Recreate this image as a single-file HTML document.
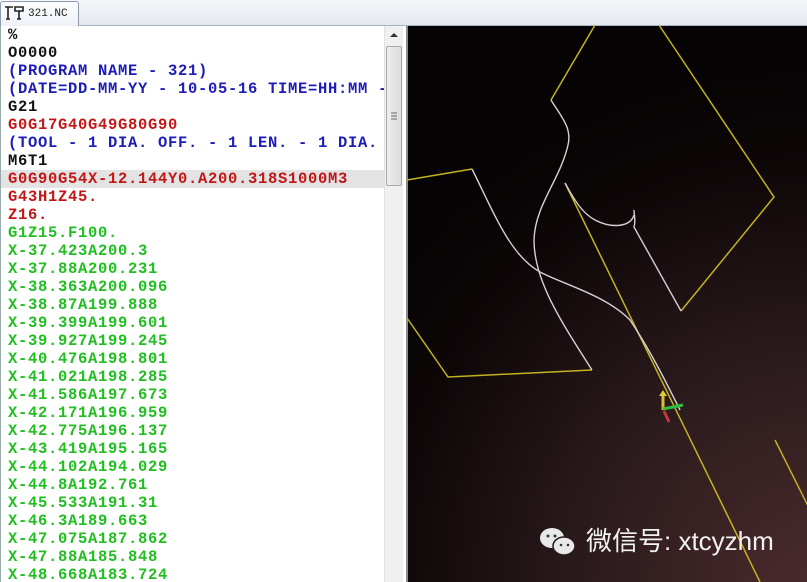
<!DOCTYPE html>
<html><head><meta charset="utf-8"><style>
body{margin:0;width:807px;height:582px;overflow:hidden;background:#fff;position:relative;font-family:"Liberation Sans",sans-serif}
#tabbar{position:absolute;left:0;top:0;width:807px;height:25px;background:linear-gradient(#f4f6f9,#e4e8ee);border-bottom:1px solid #a9b4c2}
#tab{position:absolute;left:0;top:1px;width:77px;height:24px;background:linear-gradient(#fdfdfe,#eef2f7);border:1px solid #8d9bb0;border-bottom:none;border-radius:3px 3px 0 0;font:11px "Liberation Mono",monospace;color:#222}
#tab span{position:absolute;left:27px;top:6px}
#code{position:absolute;left:0;top:26px;width:384px;height:556px;overflow:hidden;background:#fff;border-left:1px solid #9aa}
.l{height:18px;line-height:19px;padding-left:7px;font:bold 15.5px "Liberation Mono",monospace;letter-spacing:0.7px;white-space:nowrap}
.k{color:#111}.b{color:#1c1cb8}.r{color:#c21616}.g{color:#1fbf1f}
.hl{background:#e3e3e3}
#sb{position:absolute;left:384px;top:26px;width:18px;height:556px;background:#f0f0f0;border-left:1px solid #e2e2e2}
#thumb{position:absolute;left:1px;top:20px;width:14px;height:138px;border:1px solid #a8a8a8;border-radius:2px;background:linear-gradient(90deg,#eee,#dcdcdc)}
#view{position:absolute;left:406px;top:26px;width:401px;height:556px;background:radial-gradient(ellipse 520px 520px at 100% 100%,#4a2a2c 0%,#2a1a1c 45%,#0e0708 80%,#050303 100%);border-left:2px solid #8a8e92}
</style></head><body>
<div id="tabbar"><div id="tab"><svg width="22" height="18" style="position:absolute;left:2px;top:2px" viewBox="0 0 22 18"><path d="M2 3h8M5 3v12M3 15h4M12 3h8v4h-8zM16 7v8M14 15h4" stroke="#222" stroke-width="1.6" fill="none"/></svg><span>321.NC</span></div></div>
<div id="code">
<div class="l k">%</div>
<div class="l k">O0000</div>
<div class="l b">(PROGRAM NAME - 321)</div>
<div class="l b">(DATE=DD-MM-YY - 10-05-16 TIME=HH:MM - 1</div>
<div class="l k">G21</div>
<div class="l r">G0G17G40G49G80G90</div>
<div class="l b">(TOOL - 1 DIA. OFF. - 1 LEN. - 1 DIA. M</div>
<div class="l k">M6T1</div>
<div class="l r hl">G0G90G54X-12.144Y0.A200.318S1000M3</div>
<div class="l r">G43H1Z45.</div>
<div class="l r">Z16.</div>
<div class="l g">G1Z15.F100.</div>
<div class="l g">X-37.423A200.3</div>
<div class="l g">X-37.88A200.231</div>
<div class="l g">X-38.363A200.096</div>
<div class="l g">X-38.87A199.888</div>
<div class="l g">X-39.399A199.601</div>
<div class="l g">X-39.927A199.245</div>
<div class="l g">X-40.476A198.801</div>
<div class="l g">X-41.021A198.285</div>
<div class="l g">X-41.586A197.673</div>
<div class="l g">X-42.171A196.959</div>
<div class="l g">X-42.775A196.137</div>
<div class="l g">X-43.419A195.165</div>
<div class="l g">X-44.102A194.029</div>
<div class="l g">X-44.8A192.761</div>
<div class="l g">X-45.533A191.31</div>
<div class="l g">X-46.3A189.663</div>
<div class="l g">X-47.075A187.862</div>
<div class="l g">X-47.88A185.848</div>
<div class="l g">X-48.668A183.724</div>
</div>
<div id="sb"><svg width="16" height="14" style="position:absolute;left:1px;top:2px"><path d="M4 9l4-4 4 4z" fill="#333"/></svg><div id="thumb"><svg width="14" height="10" style="position:absolute;left:0;top:64px"><path d="M4 2h6M4 5h6M4 8h6" stroke="#666"/></svg></div></div>
<div id="view"></div>
<svg width="807" height="582" style="position:absolute;left:0;top:0" viewBox="0 0 807 582">
<g fill="none" stroke="#c4b21e" stroke-width="1.5">
<path d="M595 25L551 100"/>
<path d="M407 180L472 169"/>
<path d="M592 370L448 377L407 318"/>
<path d="M659 25L774 197L681 311"/>
<path d="M565 183L760 582"/>
<path d="M775 440L815 520"/>
</g>
<g fill="none" stroke="#d6d0d4" stroke-width="1.4">
<path d="M551 100C562 118 572 128 568 145C560 180 535 205 534 240C534 280 560 320 592 370"/>
<path d="M472 169C495 215 510 255 540 272C565 285 605 295 630 320C650 350 665 380 680 410"/>
<path d="M681 311L634 227C636 220 634 215 634 210M634 215C630 228 610 228 595 220C580 212 572 195 565 183"/>
</g>
<path d="M663 410V394" stroke="#d8c030" stroke-width="3"/><path d="M659 396l4-6 4 6z" fill="#e0c838"/>
<path d="M663 409L683 405" stroke="#2ec03a" stroke-width="3"/>
<path d="M664 411L669 422" stroke="#c0383c" stroke-width="3"/>
<g transform="translate(540,527)"><ellipse cx="12" cy="11" rx="12" ry="10" fill="#e8e8e8"/><ellipse cx="24" cy="19" rx="11" ry="9" fill="#e8e8e8" stroke="#2a1a1c" stroke-width="1.5"/><circle cx="8" cy="9" r="1.5" fill="#333"/><circle cx="15" cy="9" r="1.5" fill="#333"/><circle cx="21" cy="18" r="1.3" fill="#333"/><circle cx="28" cy="18" r="1.3" fill="#333"/></g>
<text x="586" y="550" font-family="Liberation Sans,Noto Sans CJK SC,sans-serif" font-size="26" fill="#f2f2f2">微信号: xtcyzhm</text>
</svg>
</body></html>
